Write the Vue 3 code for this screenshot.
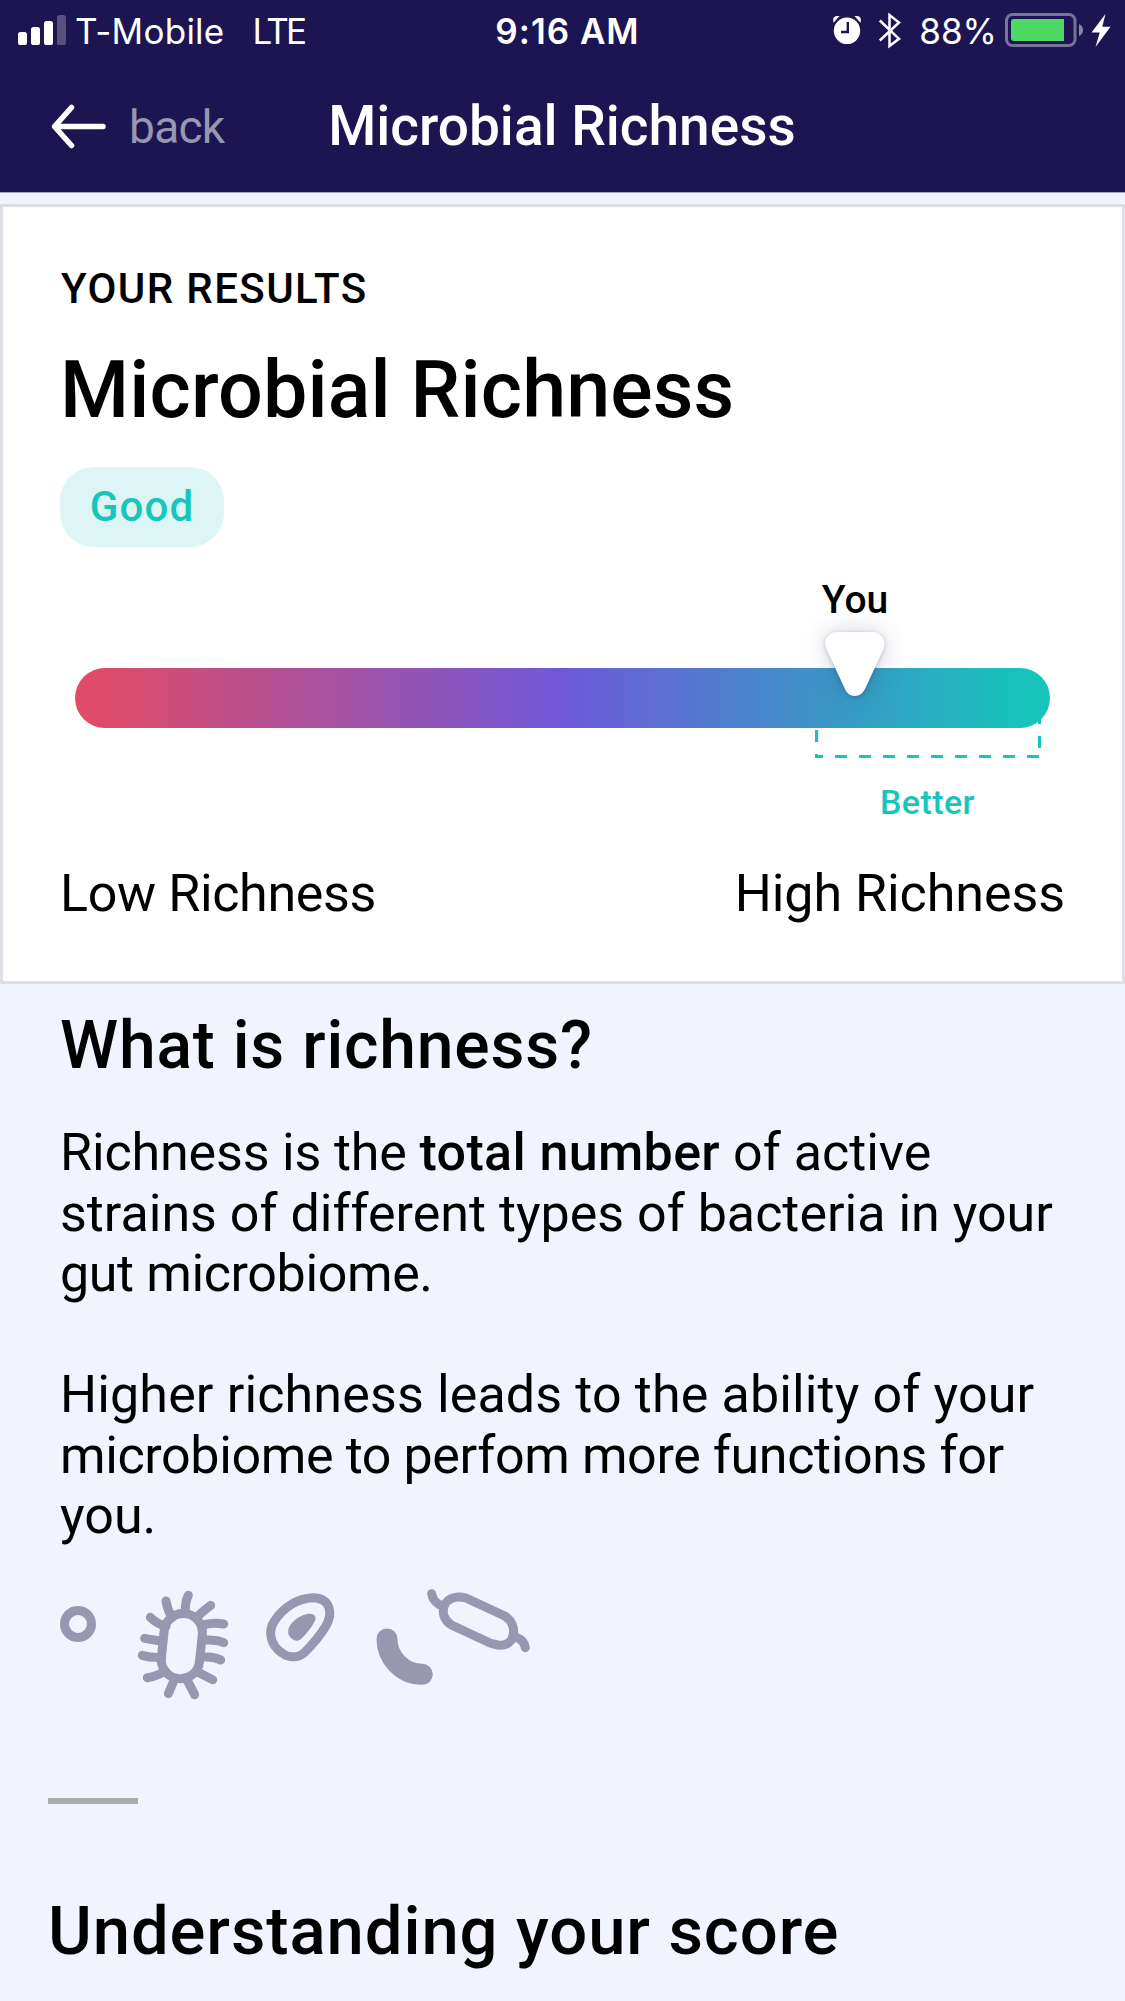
<template>
  <div class="screen">
    <header class="top">
      <div class="status">
        <div class="status-left">
          <svg class="signal" viewBox="0 0 50 62">
            <rect x="0" y="32" width="9" height="13" rx="2.6" />
            <rect x="13" y="27" width="9" height="18" rx="2.6" />
            <rect x="26" y="21" width="9" height="24" rx="2.6" />
            <rect class="dim" x="39" y="15" width="9" height="30" rx="2.6" />
          </svg>
          <span class="carrier">T-Mobile</span>
          <span class="network">LTE</span>
        </div>
        <span class="time">9:16 AM</span>
        <div class="status-right">
          <svg class="alarm" viewBox="832 0 30 62">
            <circle cx="847" cy="30.8" r="13.2" />
            <path d="M833.2 22.2V19.5Q833.4 16 837 16h2.6L833.8 22.4ZM860.8 22.2V19.5Q860.6 16 857 16h-2.6L860.2 22.4Z" />
            <path class="hands" d="M847.8 22v10H841" />
          </svg>
          <svg class="bluetooth" viewBox="878 0 24 62">
            <path d="M879.8 20.5 899 38.8 889.5 46V15L899 22.5 879.8 40.5" />
          </svg>
          <span class="percent">{{ battery }}%</span>
          <svg class="battery" viewBox="1004 0 80 62">
            <rect class="shell" x="1006.5" y="14.5" width="68.5" height="31" rx="6" />
            <path class="level" d="M1014 19h50v22h-50q-3 0-3-3V22q0-3 3-3Z" />
            <path class="cap" d="M1079 24q4 2 4 6t-4 6Z" />
          </svg>
          <svg class="bolt" viewBox="1091 0 20 62">
            <path d="M1105.500 14 1091.500 32.500h8.200L1095.500 47l15-20.200h-8.200Z" />
          </svg>
        </div>
      </div>

      <nav class="nav">
        <a class="back">
          <svg viewBox="0 0 60 50">
            <path d="M53 24.5H5M21.5 5.5 4.5 24.5l17 19" />
          </svg>
          <span>back</span>
        </a>
        <h1>{{ title }}</h1>
      </nav>
    </header>

    <section class="card">
      <div class="eyebrow">YOUR RESULTS</div>
      <h2 class="headline">{{ title }}</h2>
      <div class="pill">Good</div>

      <div class="scale">
        <svg class="range" viewBox="0 0 226 40">
          <path d="M0 12h3v12H0zM0 36h3v1h5v3H0zM223 0h3v6h-3zM223 18h3v12h-3z" />
          <path v-for="n in 9" :key="n" :d="`M${20 + (n - 1) * 24} 37h12v3h-12z`" />
        </svg>
        <span class="range-label">Better</span>
        <div class="bar" />
        <div class="marker" :style="{ left: score + '%' }">
          <span>You</span>
          <svg viewBox="0 0 181 195">
            <path d="M36 0H146Q166 1 177 19 184 33 179 50L124 168Q113 195 90.500 195 68 195 58 168L3 50Q-3 33 4 19 15 1 36 0Z" />
          </svg>
        </div>
      </div>

      <div class="ends">
        <span class="low">Low Richness</span>
        <span class="high">High Richness</span>
      </div>
    </section>

    <section class="about">
      <h3>What is richness?</h3>
      <p>
        <span class="snug">Richness is the </span><b>total number</b> of active<br>
        strains of different types of bacteria in your<br>
        <span class="tight">gut microbiome.</span>
      </p>
      <p>
        <span class="loose">Higher richness leads to the ability of your</span><br>
        <span class="tight">microbiome to perfom more functions for</span><br>
        you.
      </p>

      <!-- microbes: coccus, ciliated rod, egg cell, curved rod, flagellated rod -->
      <svg class="microbes" viewBox="0 0 1500 360">
        <circle cx="84" cy="117" r="40.500" />
        <g>
          <rect x="338" y="86" width="115" height="196" rx="57" transform="rotate(6 402 184)" />
          <path d="M406 86Q404 52 415 31M366 98Q352 74 348 48M348 124Q320 116 301 97M338 169 284 160M335 217Q300 218 277 211M346 258Q318 275 292 278M372 286 355 326M412 286 434 329M444 262 488 284M462 216Q492 214 512 225M468 165Q500 164 521 173M462 119Q492 111 521 117M444 93Q464 74 482 61" />
        </g>
        <path d="M788 38C842 38 850 86 827 124 806 158 790 176 766 200 744 221 716 219 696 204 658 178 654 136 674 107 700 66 744 40 788 38Z" />
        <path class="solid" d="M772 87C794 83 802 97 793 111 784 128 772 143 757 158 746 170 734 169 724 160 710 148 713 128 724 116 738 99 754 91 772 87Z" />
        <path class="thick" d="M1011 162C1011 218 1057 268 1117 268" />
        <path d="M1248 39 1364 93C1406 116 1398 188 1344 180L1322 175 1206 121C1158 94 1178 20 1248 39Z" />
        <path d="M1145 26Q1147 46 1168 59M1398 157Q1422 164 1426 188" />
      </svg>

      <div class="divider" />
      <h3 class="score-title">Understanding your score</h3>
    </section>
  </div>
</template>

<script setup>
const title = 'Microbial Richness'
const battery = 88
// Position of the "You" marker along the bar, in percent.
const score = 80
</script>

<style>
body {
  background: #f1f3ff;
}
</style>

<style scoped>
.screen {
  width: 1125px;
  height: 2001px;
  overflow: hidden;
  background: #f1f3ff;
  color: #000;
  font-family: Roboto, sans-serif;
}
svg {
  display: block;
  flex: none;
}
h1,
h2,
h3,
p {
  margin: 0;
  font-weight: 500;
  white-space: nowrap;
}

/* Header */
.top {
  height: 192px;
  border-bottom: 1px solid #a5a5ad;
  background: #1d1551;
  color: #fff;
}
.status {
  display: grid;
  grid-template-columns: 1fr auto 1fr;
  align-items: center;
  height: 62px;
  padding: 0 14px 0 18px;
  font: 35px/62px Inter, sans-serif;
}
.status svg {
  height: 62px;
  fill: #fff;
}
.status-left,
.status-right {
  display: flex;
  align-items: center;
}
.status-right {
  justify-content: flex-end;
}
.signal {
  width: 50px;
}
.signal .dim {
  fill: #57517f;
}
.carrier {
  margin-left: 7px;
  letter-spacing: 0.25px;
}
.network {
  margin-left: 28px;
  letter-spacing: -2.8px;
}
.time {
  padding-left: 6px;
  font-weight: 600;
  letter-spacing: 1px;
}
.alarm {
  width: 30px;
}
.status .hands {
  fill: none;
  stroke: #1d1551;
  stroke-width: 2.4;
}
.bluetooth {
  width: 24px;
  margin-left: 16px;
}
.status .bluetooth {
  fill: none;
  stroke: #fff;
  stroke-width: 2.5;
}
.percent {
  margin: 0 7px 0 17px;
}
.battery {
  width: 80px;
}
.status .shell {
  fill: none;
  stroke: #77739a;
  stroke-width: 3;
}
.battery .level {
  fill: #4cd964;
}
.battery .cap {
  fill: #8985a8;
}
.bolt {
  width: 20px;
  margin-left: 7px;
}

.nav {
  display: grid;
  grid-template-columns: 1fr auto 1fr;
  align-items: center;
  height: 128px;
  padding: 0 49px 0 48px;
}
.back {
  display: flex;
  align-items: center;
  padding: 2px 0 0 2px;
  color: #9797b2;
  font-size: 46px;
  line-height: 60px;
  letter-spacing: -0.7px;
}
.back svg {
  width: 60px;
  height: 50px;
  fill: none;
  stroke: #fff;
  stroke-width: 5.5;
  stroke-linecap: round;
  stroke-linejoin: round;
}
.back span {
  margin-left: 19px;
}
.nav h1 {
  font-size: 55px;
  line-height: 66px;
}

/* Results card */
.card {
  margin-top: 11px;
  padding: 57px 57px 57px;
  border: 3px solid #dedee4;
  background: #fff;
}
.eyebrow {
  padding-left: 1px;
  font-size: 42px;
  font-weight: 500;
  line-height: 50px;
  letter-spacing: 1.4px;
}
.headline {
  margin-top: 31px;
  font-size: 79px;
  line-height: 90px;
  letter-spacing: 0.15px;
}
.pill {
  width: 164px;
  height: 80px;
  margin-top: 32px;
  border-radius: 34px;
  background: #ddf6f5;
  color: #17c6bb;
  font-size: 42px;
  font-weight: 500;
  line-height: 79px;
  letter-spacing: 1.2px;
  text-align: center;
}
.scale {
  position: relative;
  height: 60px;
  margin: 121px 15px 0;
}
.bar {
  position: relative;
  height: 60px;
  border-radius: 30px;
  background: linear-gradient(90deg, #e04b67 2%, #6f58d9 50%, #17c3bb 97%);
}
.range {
  position: absolute;
  top: 50px;
  left: 740px;
  width: 226px;
  height: 40px;
  fill: #17c3bb;
}
.range-label {
  position: absolute;
  top: 114px;
  left: 805px;
  color: #17c6bb;
  font-size: 34px;
  font-weight: 500;
  line-height: 40px;
  letter-spacing: 0.4px;
}
.marker {
  position: absolute;
  bottom: 32px;
  display: flex;
  flex-direction: column;
  align-items: center;
  transform: translateX(-50%);
}
.marker span {
  margin-bottom: 10px;
  font-size: 39px;
  font-weight: 500;
  line-height: 44px;
}
.marker svg {
  width: 60px;
  height: 64px;
  overflow: visible;
  fill: #fff;
  filter: drop-shadow(0 1px 2px rgba(29, 21, 81, 0.25)) drop-shadow(0 0 14px rgba(29, 21, 81, 0.18));
}
.ends {
  display: flex;
  justify-content: space-between;
  margin-top: 136px;
  font-size: 52px;
  line-height: 60px;
}
.low {
  letter-spacing: -0.35px;
}
.high {
  letter-spacing: -0.05px;
}

/* Explanation */
.about {
  padding: 22px 60px 0;
}
.about h3 {
  font-size: 66px;
  line-height: 80px;
  letter-spacing: 0.8px;
}
.about p {
  font-size: 52px;
  font-weight: 400;
  line-height: 60.5px;
}
.about h3 + p {
  margin-top: 37px;
}
.about p + p {
  margin-top: 60.5px;
}
.about b {
  font-weight: 500;
  letter-spacing: 0.35px;
}
.snug {
  letter-spacing: -0.15px;
}
.loose {
  letter-spacing: 0.14px;
}
.tight {
  letter-spacing: -0.38px;
}
.microbes {
  width: 500px;
  height: 120px;
  margin: 38.5px 0 0 -10px;
  fill: none;
  stroke: #9797b2;
  stroke-width: 27;
  stroke-linecap: round;
}
.microbes .solid {
  fill: #9797b2;
  stroke: none;
}
.microbes .thick {
  stroke-width: 63;
}
.divider {
  width: 90px;
  height: 6px;
  margin: 93px 0 0 -12px;
  background: #ababab;
}
.about .score-title {
  margin: 87px 0 0 -12px;
  font-size: 67px;
  letter-spacing: 0.9px;
}
</style>
